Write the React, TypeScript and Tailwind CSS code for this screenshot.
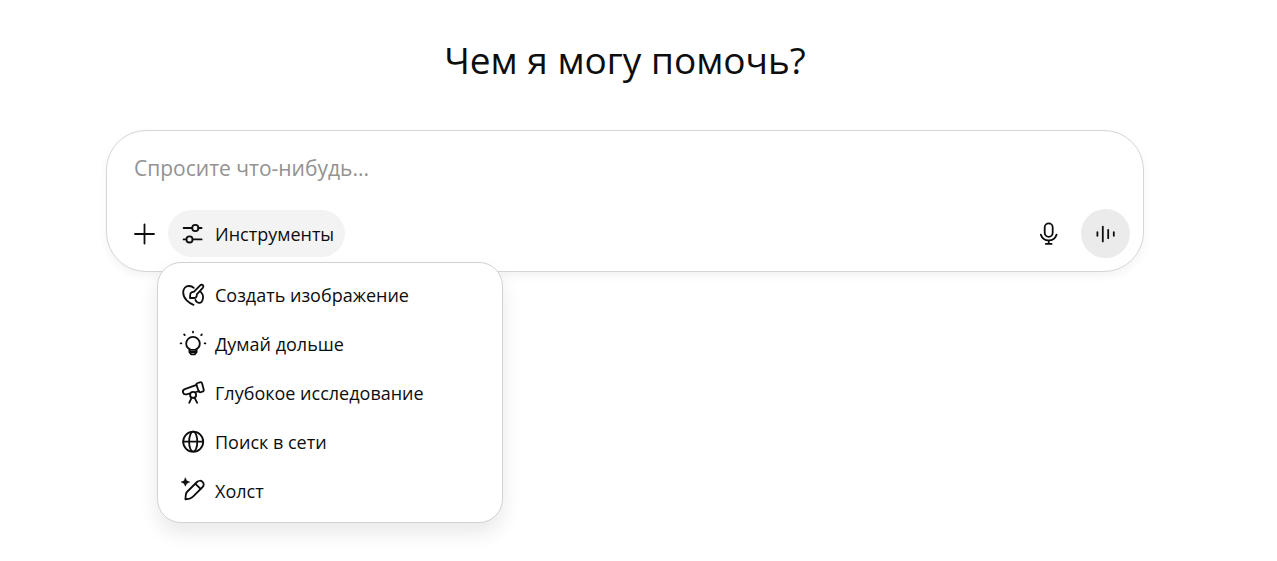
import { useState, type ReactNode } from 'react';

interface Tool {
  id: string;
  label: string;
  icon: ReactNode;
}

function Icon({ children }: { children: ReactNode }) {
  return (
    <svg
      viewBox="0 0 28 28"
      className="size-7 shrink-0"
      fill="none"
      stroke="currentColor"
      strokeWidth="1.8"
      strokeLinecap="round"
      strokeLinejoin="round"
      aria-hidden="true"
    >
      {children}
    </svg>
  );
}

const TOOLS: Tool[] = [
  {
    id: 'image',
    label: 'Создать изображение',
    icon: (
      <Icon>
        <path d="M14.6 23.8C10 22.3 4.2 17.8 4.2 11.6C4.2 7.8 6.6 5 10 5C12.2 5 13.6 5.6 14.8 6.8" />
        <path d="M11 17L11.2 13.8C11.3 11.8 12.8 10.6 14.8 10.8L21.2 4.4C22 3.6 23.2 3.5 23.9 4.2C24.6 4.9 24.5 6 23.8 6.9L17.8 13.4C18 15.8 16.8 16.9 14.8 17Z" />
        <path d="M21.6 10.8C23.6 12.6 24.4 15.2 23.9 17.6C23.4 20.2 21.8 22 19.9 21.8C18 21.6 16.8 20.2 16.4 18.8" />
      </Icon>
    )
  },
  {
    id: 'think',
    label: 'Думай дольше',
    icon: (
      <Icon>
        <path d="M11 19.8V19.4C8.6 18.2 7.2 16.2 7.2 13.6C7.2 9.8 10.2 6.8 14 6.8C17.8 6.8 20.8 9.8 20.8 13.6C20.8 16.2 19.4 18.2 17 19.4V19.8" />
        <path d="M10.4 19.9H17.6V22.1L15.7 24.4H12.3L10.4 22.1ZM11 22H17" />
        <path d="M14 1.6V2.4M5.2 4.5L5.8 5.1M22.8 4.5L22.2 5.1M1.6 13.3H2.4M25.6 13.3H26.4" />
      </Icon>
    )
  },
  {
    id: 'research',
    label: 'Глубокое исследование',
    icon: (
      <Icon>
        <path d="M17.6 5.8L5.8 10.2C4.2 10.8 3.6 12.2 4.1 13.6C4.6 15.1 5.8 15.7 7.4 15.3L11.2 14.3M17 13L20.2 12.2" />
        <path d="M18.7 4L20.9 3.3C22 3 22.8 3.5 23.1 4.5L24.7 10.5C25 11.6 24.5 12.4 23.5 12.7L21.7 13.2C20.7 13.5 19.9 13 19.6 12L17.5 6.1C17.2 5.1 17.6 4.3 18.7 4Z" />
        <circle cx="14.1" cy="15.9" r="3" />
        <path d="M12.7 18.7L10.2 23.8M15.5 18.7L18.2 23.8" />
      </Icon>
    )
  },
  {
    id: 'search',
    label: 'Поиск в сети',
    icon: (
      <Icon>
        <circle cx="14.2" cy="13.7" r="10" />
        <ellipse cx="14.2" cy="13.7" rx="4.1" ry="10" />
        <path d="M4.2 13.7H24.2" />
      </Icon>
    )
  },
  {
    id: 'canvas',
    label: 'Холст',
    icon: (
      <Icon>
        <path d="M6.4 22.4L6.8 17.9C6.9 16.5 7.4 15.5 8.4 14.5L18 5C19.6 3.4 22 3.4 23.5 4.8C25.1 6.3 25.1 8.5 23.6 10L14 19.6C13 20.6 12 21.2 10.6 21.6Z" />
        <path d="M16.4 6.8L21.6 11.8" />
        <path
          d="M6.4 1L7.7 3.8L10.7 5.1L7.7 6.4L6.4 9.2L5.1 6.4L2.1 5.1L5.1 3.8Z"
          fill="currentColor"
          stroke="currentColor"
          strokeWidth="0.5"
        />
      </Icon>
    )
  }
];

function ToolsMenu() {
  return (
    <ul className="absolute top-full -left-[11px] z-10 mt-[5px] flex w-[346px] flex-col gap-px rounded-3xl border border-[#d2d2d2] bg-white pt-2 pb-[7px] shadow-[0_10px_20px_rgba(0,0,0,0.09)]">
      {TOOLS.map((tool) => (
        <li key={tool.id}>
          <button type="button" className="flex h-12 w-full items-center gap-2 pl-[21px] text-left text-lg">
            {tool.icon}
            <span>{tool.label}</span>
          </button>
        </li>
      ))}
    </ul>
  );
}

export default function App() {
  const [prompt, setPrompt] = useState('');
  const [toolsOpen, setToolsOpen] = useState(true);

  return (
    <main className="min-h-screen bg-white pr-[133px] pb-10 pl-[106px] font-['Open_Sans','Noto_Sans',sans-serif] text-[#0d0d0d]">
      <h1 className="pt-[35px] text-center text-[37px] leading-[50px]">Чем я могу помочь?</h1>

      <form
        className="mt-[45px] rounded-[40px] border border-[#d6d6d6] bg-white px-[13px] pt-[15px] pb-[13px] shadow-[0_4px_10px_rgba(0,0,0,0.05)]"
        onSubmit={(e) => e.preventDefault()}
      >
        <input
          type="text"
          aria-label="Спросите что-нибудь"
          placeholder="Спросите что-нибудь..."
          value={prompt}
          onChange={(e) => setPrompt(e.target.value)}
          className="block h-11 w-full px-[14px] text-[21px] outline-none placeholder:text-[#929292]"
        />

        {/* Toolbar */}
        <div className="mt-[19px] flex items-center">
          <button type="button" aria-label="Добавить" className="flex size-12 items-center justify-center">
            <Icon>
              <path d="M14.5 4.5V23.5M5 14H24" />
            </Icon>
          </button>

          <div className="relative">
            <button
              type="button"
              aria-expanded={toolsOpen}
              onClick={() => setToolsOpen(!toolsOpen)}
              className="flex h-[47px] items-center gap-2 rounded-full bg-[#f3f3f3] px-[11px] text-lg"
            >
              <Icon>
                <circle cx="16.3" cy="8" r="3.1" />
                <path d="M4.6 8H13.2M19.4 8H22.6" />
                <circle cx="10.5" cy="19.4" r="3.1" />
                <path d="M4.6 19.4H7.4M13.6 19.4H22.6" />
              </Icon>
              Инструменты
            </button>
            {toolsOpen && <ToolsMenu />}
          </div>

          <div className="ml-auto flex items-center gap-2">
            <button type="button" aria-label="Диктовать" className="flex size-12 items-center justify-center">
              <Icon>
                <rect x="9.7" y="3.4" width="8" height="13.4" rx="4" />
                <path d="M5.8 14.6C7 18 10 20.4 13.7 20.4C17.4 20.4 20.4 18 21.6 14.6M13.7 20.4V23.8M10.8 23.9H16.6" />
              </Icon>
            </button>
            <button
              type="button"
              aria-label="Голосовой режим"
              className="flex size-[49px] items-center justify-center rounded-full bg-[#ebebeb]"
            >
              <Icon>
                <path d="M5.4 12.2V15.8M10.8 6.6V21.4M16.2 10V18.2M21.8 12.2V15.8" />
              </Icon>
            </button>
          </div>
        </div>
      </form>
    </main>
  );
}
